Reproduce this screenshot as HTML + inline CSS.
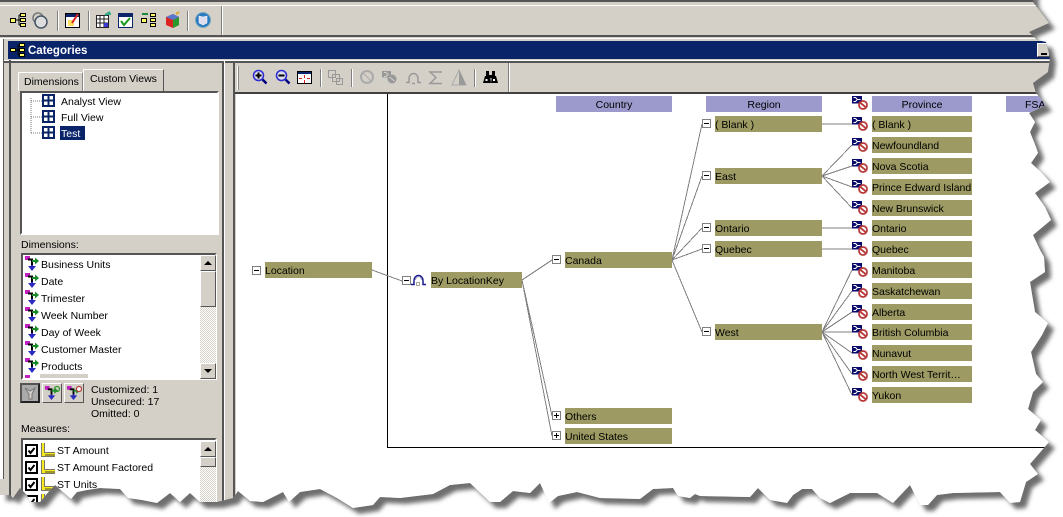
<!DOCTYPE html>
<html><head><meta charset="utf-8"><style>
html,body{margin:0;padding:0;background:#fff;width:1063px;height:517px;overflow:hidden}
body{font:10.500px "Liberation Sans",sans-serif;color:#000;position:relative}
#shadow{position:absolute;left:0;top:0}
#page{position:absolute;left:0;top:0;width:1063px;height:517px;background:#d4d0c8;
clip-path:polygon(0 495px,10px 495px,13px 498px,20px 488px,27px 495px,30px 502px,40px 502px,50px 490px,55px 485px,63px 492px,71px 499px,77px 492px,87px 490px,100px 488px,120px 489px,128px 498px,142px 500px,157px 503px,170px 493px,180px 502px,190px 493px,200px 502px,217px 502px,233px 498px,238px 491px,250px 501px,263px 502px,283px 492px,289px 502px,300px 492px,320px 489px,337px 498px,353px 508px,373px 505px,380px 497px,400px 498px,433px 494px,450px 485px,470px 483px,490px 502px,500px 502px,513px 491px,530px 493px,540px 483px,549px 503px,558px 496px,577px 492px,600px 498px,640px 499px,653px 489px,673px 488px,678px 496px,690px 498px,695px 494px,700px 496px,750px 497px,758px 488px,770px 500px,787px 503px,793px 495px,802px 489px,812px 489px,820px 498px,830px 503px,850px 493px,877px 493px,893px 503px,910px 485px,920px 505px,928px 505px,937px 495px,953px 493px,1000px 492px,1010px 503px,1020px 502px,1026px 482px,1038px 474px,1030px 464px,1049px 442px,1035px 430px,1041px 420px,1028px 409px,1033px 392px,1043px 382px,1036px 374px,1031px 352px,1042px 335px,1048px 323px,1035px 312px,1030px 282px,1045px 272px,1044px 257px,1040px 250px,1033px 235px,1051px 220px,1045px 207px,1035px 193px,1050px 182px,1041px 172px,1031px 163px,1038px 153px,1036px 147px,1030px 132px,1035px 122px,1029px 113px,1046px 105px,1036px 93px,1033px 83px,1048px 72px,1050px 57px,1046px 42px,1037px 40px,1029px 32px,1049px 23px,1033px 2px,1033px 0,0 0)}
.a{position:absolute}
.t{position:absolute;white-space:nowrap;line-height:18px;height:16px}
.n{position:absolute;height:16px;line-height:18px;background:#9d9b63;white-space:nowrap;overflow:hidden}
.h{position:absolute;height:16px;line-height:18px;background:#9c9acc;text-align:center;top:96px;overflow:hidden}
.w{position:absolute;background:#fff}
.in{position:absolute;background:#fff;border:2px solid;border-color:#555 #fff #fff #555;box-sizing:border-box}
.btn{position:absolute;background:#d4d0c8;border:1px solid;border-color:#fff #555 #555 #fff;box-sizing:border-box}
.dith{position:absolute;background:repeating-conic-gradient(#d4d0c8 0 25%,#fff 0 50%) 0 0/2px 2px}
.sep{position:absolute;width:1px;background:#808080;border-right:1px solid #fff}
</style></head><body>
<svg id="shadow" width="1063" height="517"><defs><filter id="b" x="-5%" y="-5%" width="110%" height="110%"><feGaussianBlur stdDeviation="2"/></filter></defs>
<polygon transform="translate(6,6)" filter="url(#b)" fill="#6e6e6e" points="0,495 10,495 13,498 20,488 27,495 30,502 40,502 50,490 55,485 63,492 71,499 77,492 87,490 100,488 120,489 128,498 142,500 157,503 170,493 180,502 190,493 200,502 217,502 233,498 238,491 250,501 263,502 283,492 289,502 300,492 320,489 337,498 353,508 373,505 380,497 400,498 433,494 450,485 470,483 490,502 500,502 513,491 530,493 540,483 549,503 558,496 577,492 600,498 640,499 653,489 673,488 678,496 690,498 695,494 700,496 750,497 758,488 770,500 787,503 793,495 802,489 812,489 820,498 830,503 850,493 877,493 893,503 910,485 920,505 928,505 937,495 953,493 1000,492 1010,503 1020,502 1026,482 1038,474 1030,464 1049,442 1035,430 1041,420 1028,409 1033,392 1043,382 1036,374 1031,352 1042,335 1048,323 1035,312 1030,282 1045,272 1044,257 1040,250 1033,235 1051,220 1045,207 1035,193 1050,182 1041,172 1031,163 1038,153 1036,147 1030,132 1035,122 1029,113 1046,105 1036,93 1033,83 1048,72 1050,57 1046,42 1037,40 1029,32 1049,23 1033,2 1033,-10 0,-10"/></svg>
<div id="page">
<!-- top toolbar frame -->
<div class="a" style="left:0;top:0;width:1063px;height:2px;background:#555"></div>
<div class="a" style="left:0;top:5px;width:1063px;height:1px;background:#fff"></div>
<div class="a" style="left:0;top:35px;width:1063px;height:2px;background:#555"></div>
<div class="a" style="left:0;top:38px;width:1063px;height:1px;background:#fff"></div>
<div class="sep" style="left:57px;top:11px;height:20px"></div>
<div class="sep" style="left:88px;top:11px;height:20px"></div>
<div class="sep" style="left:187px;top:11px;height:20px"></div>
<div class="sep" style="left:221px;top:6px;height:29px"></div>
<svg class="a" style="left:0;top:0" width="225" height="36">
<g stroke="#000" fill="#ffff66"><path fill="none" d="M15 20h4M19 15v10M19 15h3M19 20h3M19 25h3"/><rect x="10.500" y="18.500" width="5" height="4"/><rect x="20.500" y="13.500" width="5" height="3"/><rect x="20.500" y="18.500" width="5" height="3"/><rect x="20.500" y="23.500" width="5" height="3"/></g>
<circle cx="38" cy="18" r="5" fill="#d4d0c8" stroke="#777" stroke-width="1.500"/><circle cx="41" cy="22" r="6" fill="#ddd" stroke="#456" stroke-width="1.500"/>
<rect x="65.500" y="13.500" width="14" height="14" fill="#fff" stroke="#000"/><rect x="66" y="14" width="13" height="3" fill="#0a246a"/><rect x="68" y="20" width="6" height="6" fill="#ffe060"/><path d="M72 23l6-9" stroke="#d22" stroke-width="2"/>
<rect x="96.500" y="15.500" width="12" height="12" fill="#fff" stroke="#222"/><path d="M100 16v11M104 16v11M97 19h11M97 23h11" stroke="#222"/><rect x="104" y="23" width="4" height="4" fill="#3a3ad0"/><path d="M105 15l5-3M107 14h4" stroke="#3a8" stroke-width="2"/>
<rect x="118.500" y="13.500" width="14" height="14" fill="#fff" stroke="#0a246a"/><rect x="119" y="14" width="13" height="3" fill="#0a246a"/><path d="M121 21l3 4 6-7" fill="none" stroke="#1a9a1a" stroke-width="2"/>
<g stroke="#000" fill="#ffff66"><rect x="141.500" y="18.500" width="5" height="4"/><rect x="150.500" y="13.500" width="5" height="3"/><rect x="150.500" y="18.500" width="5" height="3"/><rect x="150.500" y="23.500" width="5" height="3"/></g><path d="M142 14h6" stroke="#1a8a3a" stroke-width="2"/>
<path d="M166 17l7-3 6 3v8l-6 3-7-3z" fill="#d22"/><path d="M173 20l6-3v8l-6 3z" fill="#2a9a2a"/><path d="M166 17l7-3 6 3-6 3z" fill="#5577cc"/><path d="M176 14l3-2" stroke="#da3" stroke-width="2"/>
<circle cx="203" cy="20" r="7.500" fill="#2a7ac0" stroke="#7ab"/><path d="M199 16l4 1 4-1v7l-4 2-4-2z" fill="#dde" stroke="#fff" stroke-width=".5"/>
</svg>
<!-- title bar -->
<div class="a" style="left:8px;top:41px;width:1045px;height:18px;background:#0a246a"></div>
<svg class="a" style="left:10px;top:43px" width="16" height="14"><g stroke="#000" fill="#ffff66"><path fill="none" d="M6 7h2M8 2v10M8 2h2M8 7h2M8 12h2"/><rect x=".5" y="5.500" width="5" height="3"/><rect x="9.500" y=".5" width="5" height="3"/><rect x="9.500" y="5.500" width="5" height="3"/><rect x="9.500" y="10.500" width="5" height="3"/></g></svg>
<div class="t" style="left:28px;top:42px;color:#fff;font-weight:bold;font-size:11.500px">Categories</div>
<div class="btn" style="left:1037px;top:43px;width:13px;height:14px"><div class="a" style="left:3px;top:9px;width:6px;height:2px;background:#000"></div></div>
<div class="a" style="left:0;top:60px;width:1063px;height:1px;background:#fff"></div>
<div class="a" style="left:0;top:61px;width:1063px;height:2px;background:#555"></div>
<!-- far-left sliver -->
<div class="a" style="left:0;top:39px;width:3px;height:440px;background:#fff"></div>
<div class="a" style="left:3px;top:39px;width:1px;height:440px;background:#555"></div>
<div class="a" style="left:9px;top:60px;width:2px;height:445px;background:#555"></div>
<div class="a" style="left:222px;top:61px;width:2px;height:445px;background:#555"></div>
<div class="a" style="left:224px;top:61px;width:1px;height:445px;background:#fff"></div>
<div class="a" style="left:233px;top:61px;width:2px;height:445px;background:#555"></div>
<!-- tabs -->
<div class="btn" style="left:18px;top:72px;width:65px;height:19px;border-bottom:0;border-right-color:#888"></div>
<div class="t" style="left:24px;top:73px">Dimensions</div>
<div class="btn" style="left:83px;top:69px;width:81px;height:22px;border-bottom:0;"></div>
<div class="t" style="left:90px;top:70px">Custom Views</div>
<!-- tree -->
<div class="in" style="left:20px;top:91px;width:199px;height:144px"></div>
<svg class="a" style="left:0;top:90px" width="100" height="55"><path d="M31 11h11M31 27h11M31 43h11M31 8v35" stroke="#777" stroke-dasharray="1 1" fill="none"/>
<g fill="#fff" stroke="#0a246a" stroke-width="2"><rect x="43" y="5" width="11" height="11"/><path d="M48.500 5v11M43 10.500h11"/><rect x="43" y="21" width="11" height="11"/><path d="M48.500 21v11M43 26.500h11"/><rect x="43" y="37" width="11" height="11"/><path d="M48.500 37v11M43 42.500h11"/></g></svg>
<div class="t" style="left:61px;top:93px">Analyst View</div>
<div class="t" style="left:61px;top:109px">Full View</div>
<div class="t" style="left:60px;top:126px;width:25px;height:14px;line-height:16px;background:#0a246a;color:#fff;padding-left:1px;box-sizing:border-box;overflow:hidden">Test</div>
<!-- dimensions -->
<div class="t" style="left:21px;top:236px">Dimensions:</div>
<div class="in" style="left:21px;top:253px;width:196px;height:127px"></div>
<svg width="0" height="0" style="position:absolute"><defs>
<symbol id="dim" viewBox="0 0 14 15"><rect x="0" y="0" width="5" height="4" fill="#c020c0"/><path d="M3 3.500h4v7" fill="none" stroke="#000" stroke-width="2"/><path d="M7 5h4" stroke="#1a8a2a" stroke-width="2"/><path d="M10 1.500l4 3.500-4 3.500z" fill="#1a8a2a"/><path d="M7 9v2" stroke="#2a2ac0" stroke-width="2"/><path d="M3 10h8l-4 5z" fill="#2a2ac0"/></symbol>
<symbol id="sec" viewBox="0 0 16 14"><rect x="0" y="0" width="10" height="7.500" fill="#0a0a6a"/><path d="M1.500 1.500h2l2 2-2 2h-2M5.500 3.500h3" fill="none" stroke="#fff"/><circle cx="11" cy="9" r="4" fill="#fff" stroke="#b83a3a" stroke-width="1.800"/><path d="M8.500 7l5 4" stroke="#b83a3a" stroke-width="1.800"/></symbol>
<symbol id="rul" viewBox="0 0 14 14"><path d="M0 0h4v10h10v4H0z" fill="#f8e820"/><path d="M.5 0v13.500H14M3.500 0v10M3.500 9.500H14" fill="none" stroke="#776"/><path d="M5 13v-2M7 13v-2M9 13v-2M11 13v-2M13 13v-2" stroke="#443"/></symbol>
<symbol id="chk" viewBox="0 0 13 13"><rect x="1" y="1" width="11" height="11" fill="#fff" stroke="#000" stroke-width="2"/><path d="M3.500 6.500l2 2.500 4-5" fill="none" stroke="#000" stroke-width="2"/></symbol>
</defs></svg>
<svg class="a" style="left:25px;top:256px" width="14" height="130">
<use href="#dim" y="0" width="14" height="15"/><use href="#dim" y="17" width="14" height="15"/><use href="#dim" y="34" width="14" height="15"/><use href="#dim" y="51" width="14" height="15"/><use href="#dim" y="68" width="14" height="15"/><use href="#dim" y="85" width="14" height="15"/><use href="#dim" y="102" width="14" height="15"/></svg>
<div class="t" style="left:41px;top:256px">Business Units</div>
<div class="t" style="left:41px;top:273px">Date</div>
<div class="t" style="left:41px;top:290px">Trimester</div>
<div class="t" style="left:41px;top:307px">Week Number</div>
<div class="t" style="left:41px;top:324px">Day of Week</div>
<div class="t" style="left:41px;top:341px">Customer Master</div>
<div class="t" style="left:41px;top:358px">Products</div>
<div class="a" style="left:25px;top:375px;width:5px;height:3px;background:#c020c0"></div>
<div class="a" style="left:40px;top:374px;width:48px;height:4px;background:#d4d0c8"></div>
<div class="dith" style="left:200px;top:255px;width:16px;height:123px"></div>
<div class="btn" style="left:200px;top:255px;width:16px;height:16px"><div class="a" style="left:3px;top:5px;border:4px solid transparent;border-top:0;border-bottom:4px solid #000"></div></div>
<div class="btn" style="left:200px;top:271px;width:16px;height:36px"></div>
<div class="btn" style="left:200px;top:363px;width:16px;height:16px"><div class="a" style="left:3px;top:5px;border:4px solid transparent;border-bottom:0;border-top:4px solid #000"></div></div>
<!-- buttons -->
<div class="btn" style="left:20px;top:383px;width:20px;height:20px;border:2px solid;border-color:#555 #222 #222 #555;background:#aaa"></div>
<div class="btn" style="left:42px;top:383px;width:20px;height:20px"></div>
<div class="btn" style="left:64px;top:383px;width:20px;height:20px"></div>
<svg class="a" style="left:20px;top:383px" width="66" height="20"><path d="M5 5l5 3 5-3-3 6v5H9v-5z" fill="#d4d0c8" stroke="#777"/><use href="#dim" x="25" y="3" width="13" height="14"/><use href="#dim" x="47" y="3" width="13" height="14"/><circle cx="37" cy="6" r="2.500" fill="none" stroke="#2a9a2a" stroke-width="1.200"/><circle cx="59" cy="6" r="2.500" fill="#fff" stroke="#b83a3a" stroke-width="1.200"/></svg>
<div class="t" style="left:91px;top:381px">Customized: 1</div>
<div class="t" style="left:91px;top:393px">Unsecured: 17</div>
<div class="t" style="left:91px;top:405px">Omitted: 0</div>
<!-- measures -->
<div class="t" style="left:21px;top:420px">Measures:</div>
<div class="in" style="left:21px;top:438px;width:196px;height:80px"></div>
<svg class="a" style="left:25px;top:443px" width="32" height="70">
<use href="#chk" y="1" width="13" height="13"/><use href="#chk" y="18" width="13" height="13"/><use href="#chk" y="35" width="13" height="13"/><use href="#chk" y="52" width="13" height="13"/>
<use href="#rul" x="16" y="0" width="14" height="14"/><use href="#rul" x="16" y="17" width="14" height="14"/><use href="#rul" x="16" y="34" width="14" height="14"/><use href="#rul" x="16" y="51" width="14" height="14"/></svg>
<div class="t" style="left:57px;top:442px">ST Amount</div>
<div class="t" style="left:57px;top:459px">ST Amount Factored</div>
<div class="t" style="left:57px;top:476px">ST Units</div>
<div class="dith" style="left:200px;top:441px;width:16px;height:75px"></div>
<div class="btn" style="left:200px;top:441px;width:16px;height:16px"><div class="a" style="left:3px;top:5px;border:4px solid transparent;border-top:0;border-bottom:4px solid #000"></div></div>
<div class="btn" style="left:200px;top:457px;width:16px;height:10px"></div>
<!-- right toolbar -->
<div class="a" style="left:237px;top:66px;width:1px;height:24px;background:#fff;border-right:1px solid #888"></div>
<div class="sep" style="left:320px;top:69px;height:18px"></div>
<div class="sep" style="left:351px;top:69px;height:18px"></div>
<div class="sep" style="left:474px;top:69px;height:18px"></div>
<div class="sep" style="left:508px;top:63px;height:29px"></div>
<svg class="a" style="left:236px;top:64px" width="280" height="28">
<g transform="translate(-236,-64)">
<path d="M262.500 79.500l4 4" stroke="#000080" stroke-width="2.500"/><circle cx="258.500" cy="75.500" r="5" fill="#dde" stroke="#2a2ad0" stroke-width="1.500"/><path d="M255.500 75.500h6M258.500 72.500v6" stroke="#000" stroke-width="2"/>
<path d="M285.500 79.500l4 4" stroke="#000080" stroke-width="2.500"/><circle cx="281.500" cy="75.500" r="5" fill="#dde" stroke="#2a2ad0" stroke-width="1.500"/><path d="M278.500 75.500h6" stroke="#000" stroke-width="2"/>
<rect x="297.500" y="71.500" width="14" height="12" fill="#fff" stroke="#000"/><rect x="298" y="72" width="13" height="2" fill="#0a246a"/><path d="M304.500 75v3M304.500 80v3M299 78.500h3M307 78.500h3" stroke="#e02020"/>
<g fill="none" stroke="#999"><rect x="328.500" y="70.500" width="7" height="7"/><rect x="332.500" y="74.500" width="7" height="7"/><rect x="336.500" y="78.500" width="6" height="6"/></g>
<circle cx="367" cy="77" r="6" fill="none" stroke="#aaa" stroke-width="2"/><path d="M363 73l8 8" stroke="#aaa"/>
<rect x="382" y="71" width="9" height="6.500" fill="#999"/><path d="M384 72.500h2l2 2-2 2h-2" fill="none" stroke="#d4d0c8"/><circle cx="392" cy="79" r="4.500" fill="#999"/><path d="M389.500 77l5 4" stroke="#d4d0c8"/>
<path d="M406 82.500h3v-4a4.500 5 0 0 1 9 0v4h3M412 83.500h3" fill="none" stroke="#999" stroke-width="1.500"/>
<path d="M442 72h-12l6 5.500-6 6h12" fill="none" stroke="#999" stroke-width="1.500"/>
<path d="M459 70l7 15h-14z" fill="#d4d0c8" stroke="#aaa"/><path d="M459 70l7 15h-7z" fill="#999"/>
<path d="M483 83l2-7h5l1 7zM491 83l1-7h4l2 7z" fill="#000"/><rect x="486" y="71" width="3" height="5"/><rect x="492" y="71" width="3" height="5"/><rect x="489" y="75" width="3" height="3"/><rect x="485.500" y="79" width="2" height="2" fill="#fff"/><rect x="493" y="79" width="2" height="2" fill="#fff"/>
</g></svg>
<!-- canvas -->
<div class="a" style="left:235px;top:92px;width:830px;height:2px;background:#404040"></div>
<div class="w" style="left:236px;top:94px;width:827px;height:423px"></div>
<div class="a" style="left:387px;top:94px;width:1px;height:353px;background:#000"></div>
<div class="a" style="left:387px;top:447px;width:676px;height:1px;background:#000"></div>
<svg class="a" style="left:236px;top:94px" width="827" height="360"><g transform="translate(-236,-94)">
<path shape-rendering="crispEdges" d="M372 270L402 281M522 280L552 260M522 280L552 416M522 280L552 436M672 260L702 124M672 260L702 176M672 260L702 228M672 260L702 249M672 260L702 332M822 124H852M822 176L852 145M822 176L852 166M822 176L852 187M822 176L852 208M822 228H852M822 249H852M822 332L852 270M822 332L852 291M822 332L852 312M822 332L852 332M822 332L852 353M822 332L852 374M822 332L852 395" stroke="#808080" fill="none"/>
<g fill="#fff" stroke="#808080"><rect x="252.500" y="266.500" width="8" height="8"/><rect x="402.500" y="276.500" width="8" height="8"/><rect x="552.500" y="255.500" width="8" height="8"/><rect x="552.500" y="411.500" width="8" height="8"/><rect x="552.500" y="431.500" width="8" height="8"/><rect x="702.500" y="119.500" width="8" height="8"/><rect x="702.500" y="171.500" width="8" height="8"/><rect x="702.500" y="223.500" width="8" height="8"/><rect x="702.500" y="244.500" width="8" height="8"/><rect x="702.500" y="327.500" width="8" height="8"/></g>
<path d="M254 270.500h5M404 280.500h5M554 259.500h5M554 415.500h5M556.500 413v5M554 435.500h5M556.500 433v5M704 123.500h5M704 175.500h5M704 227.500h5M704 248.500h5M704 331.500h5" stroke="#000"/>
<path d="M411 284.500h3v-4a4.500 5 0 0 1 9 0v4h3" fill="none" stroke="#1a1a90" stroke-width="1.500"/><path d="M415.500 280a3 3.500 0 0 1 6 0" fill="none" stroke="#99b"/><rect x="416.500" y="282.500" width="3" height="3" fill="#fff" stroke="#aa9"/>
<use href="#sec" x="852" y="96" width="16" height="14"/><use href="#sec" x="852" y="117" width="16" height="14"/><use href="#sec" x="852" y="138" width="16" height="14"/><use href="#sec" x="852" y="159" width="16" height="14"/><use href="#sec" x="852" y="180" width="16" height="14"/><use href="#sec" x="852" y="201" width="16" height="14"/><use href="#sec" x="852" y="221" width="16" height="14"/><use href="#sec" x="852" y="242" width="16" height="14"/><use href="#sec" x="852" y="263" width="16" height="14"/><use href="#sec" x="852" y="284" width="16" height="14"/><use href="#sec" x="852" y="305" width="16" height="14"/><use href="#sec" x="852" y="325" width="16" height="14"/><use href="#sec" x="852" y="346" width="16" height="14"/><use href="#sec" x="852" y="367" width="16" height="14"/><use href="#sec" x="852" y="388" width="16" height="14"/>
</g></svg>
<div class="h" style="left:556px;width:116px">Country</div>
<div class="h" style="left:706px;width:116px">Region</div>
<div class="h" style="left:872px;width:100px">Province</div>
<div class="h" style="left:1006px;width:60px;text-align:left;text-indent:19px">FSA</div>
<div class="n" style="left:265px;top:262px;width:107px">Location</div>
<div class="n" style="left:431px;top:272px;width:91px">By LocationKey</div>
<div class="n" style="left:565px;top:252px;width:107px">Canada</div>
<div class="n" style="left:565px;top:408px;width:107px">Others</div>
<div class="n" style="left:565px;top:428px;width:107px">United States</div>
<div class="n" style="left:715px;top:116px;width:107px">( Blank )</div>
<div class="n" style="left:715px;top:168px;width:107px">East</div>
<div class="n" style="left:715px;top:220px;width:107px">Ontario</div>
<div class="n" style="left:715px;top:241px;width:107px">Quebec</div>
<div class="n" style="left:715px;top:324px;width:107px">West</div>
<div class="n" style="left:872px;top:116px;width:100px">( Blank )</div>
<div class="n" style="left:872px;top:137px;width:100px">Newfoundland</div>
<div class="n" style="left:872px;top:158px;width:100px">Nova Scotia</div>
<div class="n" style="left:872px;top:179px;width:100px">Prince Edward Island</div>
<div class="n" style="left:872px;top:200px;width:100px">New Brunswick</div>
<div class="n" style="left:872px;top:220px;width:100px">Ontario</div>
<div class="n" style="left:872px;top:241px;width:100px">Quebec</div>
<div class="n" style="left:872px;top:262px;width:100px">Manitoba</div>
<div class="n" style="left:872px;top:283px;width:100px">Saskatchewan</div>
<div class="n" style="left:872px;top:304px;width:100px">Alberta</div>
<div class="n" style="left:872px;top:324px;width:100px">British Columbia</div>
<div class="n" style="left:872px;top:345px;width:100px">Nunavut</div>
<div class="n" style="left:872px;top:366px;width:100px">North West Territ…</div>
<div class="n" style="left:872px;top:387px;width:100px">Yukon</div>
</div>
</body></html>
